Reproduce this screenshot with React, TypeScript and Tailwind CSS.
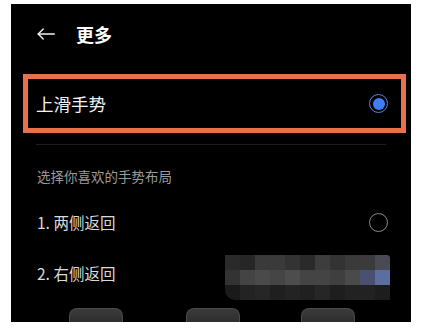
import React from "react";

const rows: string[][] = [
  ["bg-[#2a2a2a]", "bg-[#262626]", "bg-[#3a3a3a]", "bg-[#3a3a3a]", "bg-[#333333]", "bg-[#2a2a2a]", "bg-[#3d3d3d]", "bg-[#333333]", "bg-[#3a3a3a]", "bg-[#3b3b3b]", "bg-[#4a4a55]"],
  ["bg-[#333333]", "bg-[#444444]", "bg-[#4a4a4a]", "bg-[#454545]", "bg-[#4d4d4d]", "bg-[#444444]", "bg-[#444444]", "bg-[#3f3f3f]", "bg-[#4a4a4a]", "bg-[#4b5070]", "bg-[#5a6fa0]"],
  ["bg-[#1a1a1a]", "bg-[#232323]", "bg-[#262626]", "bg-[#1f1f1f]", "bg-[#232323]", "bg-[#202020]", "bg-[#262626]", "bg-[#1e1e1e]", "bg-[#222222]", "bg-[#222222]", "bg-[#1d1d1d]"],
];

function Mosaic() {
  return (
    <div className="mt-[7px] flex h-[45px] w-[165px] flex-col self-start overflow-hidden rounded-tr-[3px] rounded-bl-[10px]">
      {rows.map((r, i) => (
        <div key={i} className="flex h-[15px]">
          {r.map((c, j) => (
            <div key={j} className={`h-[15px] w-[15px] ${c}`} />
          ))}
        </div>
      ))}
    </div>
  );
}

function Tab({ className }: { className: string }) {
  return (
    <div
      className={`h-[14px] w-[54px] rounded-t-[8px] border border-b-0 border-[#4a4a4a] bg-gradient-to-b from-[#3a3a3a] to-[#2e2e2e] ${className}`}
    />
  );
}

export default function App() {
  return (
    <div
      className="h-[328px] w-[423px] bg-white pl-[11px] pt-[4px]"
      style={{ fontFamily: '"Noto Sans CJK SC", "Noto Sans", sans-serif' }}
    >
      <div className="flex h-[318px] w-[400px] flex-col overflow-hidden bg-black">
        {/* Header */}
        <div className="flex h-[59px] items-center pl-[26px]">
          <svg width="18" height="12" viewBox="0 0 18 12" fill="none" stroke="#f2f2f2" strokeWidth="1.4" strokeLinecap="round" strokeLinejoin="round">
            <path d="M17.3 6H1.2" />
            <path d="M6.2 1L1.2 6l5 5" />
          </svg>
          <span className="ml-[21px] text-[18px] font-bold leading-none text-white">更多</span>
        </div>

        {/* Highlighted row */}
        <div className="ml-[12px] mt-[11px] flex h-[59px] w-[383px] items-center justify-between border-[5px] border-[#ea6f4b] pl-[8px] pr-[13px]">
          <span className="text-[17.5px] leading-none text-[#f2f2f2]">上滑手势</span>
          <div className="flex h-[19px] w-[19px] items-center justify-center rounded-full border-[1.5px] border-[#5b7fe0]">
            <div className="h-[12px] w-[12px] rounded-full bg-[#3f7ef5]" />
          </div>
        </div>

        {/* Separator */}
        <div className="ml-[25px] mt-[11px] h-px w-[350px] bg-[#1c1c1c]" />

        {/* Section heading */}
        <div className="ml-[26px] mt-[21px] h-[20px] text-[13.5px] leading-[20px] text-[#9a9a9a]">
          选择你喜欢的手势布局
        </div>

        {/* Item 1 */}
        <div className="mt-[11px] flex h-[51px] items-center justify-between pl-[26px] pr-[23px]">
          <span className="text-[15.5px] leading-none text-[#dadada]">1. 两侧返回</span>
          <div className="h-[19px] w-[19px] rounded-full border-[1.5px] border-[#8a8a8a]" />
        </div>

        {/* Item 2 */}
        <div className="flex h-[51px] items-center justify-between pl-[26px] pr-[21px]">
          <span className="text-[15.5px] leading-none text-[#dadada]">2. 右侧返回</span>
          <Mosaic />
        </div>

        {/* Bottom tabs */}
        <div className="mt-[9px] flex">
          <Tab className="ml-[58px]" />
          <Tab className="ml-[63px]" />
          <Tab className="ml-[61px]" />
        </div>
      </div>
    </div>
  );
}
